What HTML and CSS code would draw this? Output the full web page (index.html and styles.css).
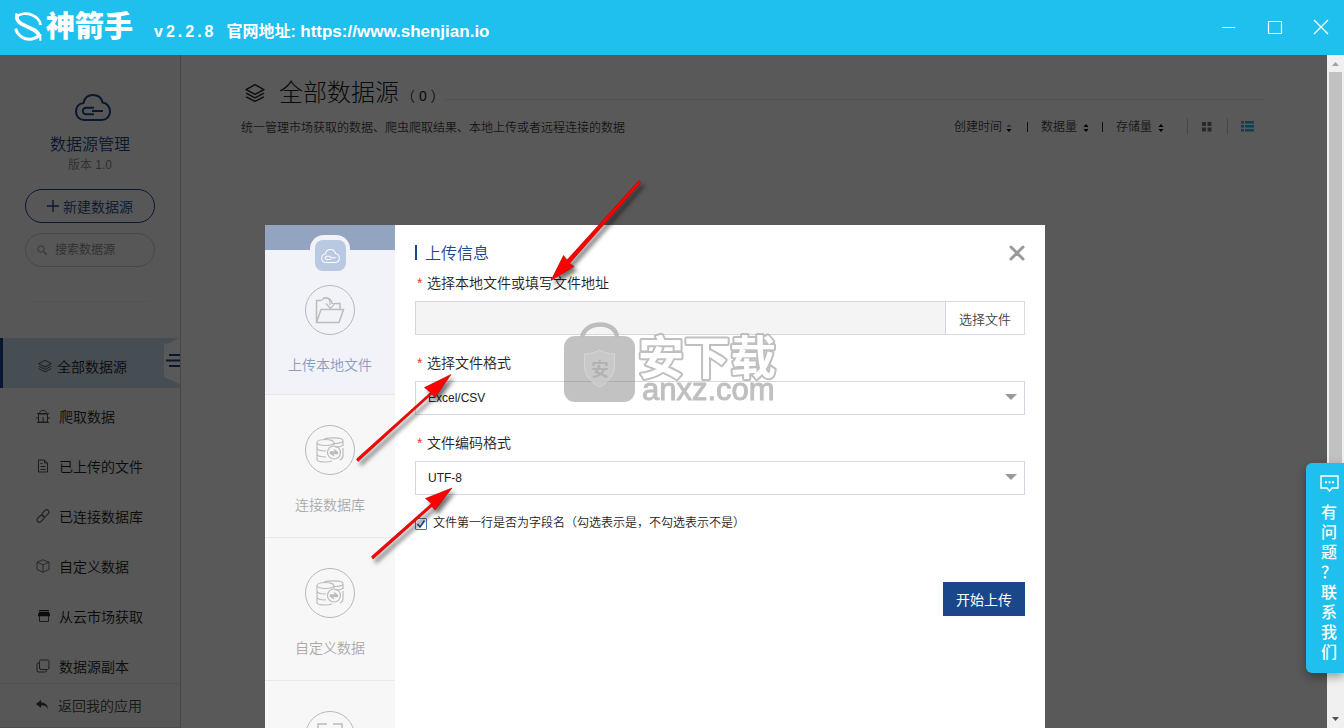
FILE: index.html
```html
<!DOCTYPE html>
<html lang="zh-CN">
<head>
<meta charset="utf-8">
<title>神箭手 - 数据源管理</title>
<link rel="stylesheet" href="styles.css">
</head>
<body>
<svg class="defs" width="0" height="0" aria-hidden="true">
  <defs>
    <symbol id="layers" viewBox="0 0 18 18"><path d="M9 1.5 17 6 9 10.2 1 6Z M1 9.2l8 4.1 8-4.1 M1 12.4l8 4.1 8-4.1" fill="none" stroke="currentColor" stroke-width="1.3" stroke-linejoin="round"/></symbol>
    <symbol id="cloud" viewBox="0 0 36 27"><path d="M9 26C4 26 1 22 1 17.500C1 13 4 9.500 8.500 9C9.500 4 13 1 18 1s8.500 3 9.500 7.500C32 9 35 13 35 17.500C35 22 32 26 27 26Z" fill="none" stroke="currentColor" stroke-width="2"/><path d="M19 13.800h-8a3.200 3.200 0 0 0 0 6.400h8M17 17h11" fill="none" stroke="currentColor" stroke-width="2"/></symbol>
    <symbol id="sort" viewBox="0 0 6 10"><path d="M.5 4 3 1 5.500 4Z"/><path d="M.5 6h5L3 9Z" fill="currentColor"/></symbol>
    <symbol id="database" viewBox="0 0 28 26"><g fill="none" stroke="currentColor" stroke-width="1.200"><path d="M1 5.500C1 3.500 5 2.500 10 2.500c4 0 8 1.200 8 3s-4 3-8.500 3S1 7.500 1 5.500v17c0 1.500 4 2.500 8 2.500 3 0 5-.3 7-1M1 11c0 2 4 3 9 3M1 17c0 2 4 3 9 3M8 2.200C10 1.200 14 .8 18 .8c5 0 9 1 9 3s-4 2.700-9 2.700M27 4v5M27 11v8c0 2-1 3-3 4M18 5.500V8M19 10c4 0 8-1 8-2.500"/><circle cx="18" cy="15.500" r="6.500"/><path d="M14 15h7l-3-2.500M22 16.500h-7l3 2.500" stroke-width="1.500"/></g></symbol>
  </defs>
</svg>

<header class="titlebar">
  <svg class="logo-mark" viewBox="0 0 84 87" width="28" height="29" aria-hidden="true"><g fill="none" stroke="#fff"><path d="M6 15C16 4 38 2 54 9c14 6 24 16 26 30" stroke-width="8"/><path d="M9 12C6 32 28 38 44 46c16 8 30 12 30 26" stroke-width="11"/><path d="M5 50c5 20 27 36 49 31 10-2 18-6 23-12" stroke-width="9"/><path d="M7 4v18M79 66v20" stroke-width="6"/></g></svg>
  <span class="logo-name">神箭手</span>
  <span class="version">v2.2.8</span>
  <span class="site">官网地址: <a href="#">https://www.shenjian.io</a></span>
  <div class="window-buttons">
    <button type="button" aria-label="最小化"><svg width="16" height="16" viewBox="0 0 16 16"><path d="M1 8.500h13" stroke="#fff"/></svg></button>
    <button type="button" aria-label="最大化"><svg width="16" height="16" viewBox="0 0 16 16"><path d="M1.500 2.500h13v12h-13Z" fill="none" stroke="#fff" stroke-width="1.200"/></svg></button>
    <button type="button" aria-label="关闭"><svg width="16" height="16" viewBox="0 0 16 16"><path d="m1 1 14 14M15 1 1 15" stroke="#fff" stroke-width="1.300"/></svg></button>
  </div>
</header>

<div class="workspace">
  <aside class="sidebar">
    <div class="brand">
      <svg class="brand-cloud" width="36" height="27"><use href="#cloud"/></svg>
      <h2>数据源管理</h2>
      <p>版本 1.0</p>
    </div>
    <button type="button" class="create"><svg width="12" height="12" viewBox="0 0 12 12"><path d="M6 0v12M0 6h12" stroke="currentColor" stroke-width="1.400"/></svg>新建数据源</button>
    <label class="search">
      <svg width="10" height="10" viewBox="0 0 10 10"><path d="m6.500 6.500 3 3" stroke="currentColor" stroke-width="1.400"/><circle cx="4" cy="4" r="3.200" fill="none" stroke="currentColor"/></svg>
      <input type="text" placeholder="搜索数据源" aria-label="搜索数据源">
    </label>
    <hr class="side-rule">
    <nav class="nav">
      <a href="#" class="active"><svg width="14" height="14"><use href="#layers"/></svg>全部数据源
        <svg class="fold" width="16" height="46" viewBox="0 0 16 46" aria-hidden="true"><path d="M0 7 16 0v46L0 39Z" fill="#fff"/><path d="M5 17h11M2 22.500h14M5 28h11" stroke="#1a468a" stroke-width="2"/></svg></a>
      <a href="#"><svg width="14" height="14" viewBox="0 0 14 14"><path d="M2.500 5h9v8h-9ZM3.500 5C3.500 0 10.500 0 10.500 5M7 8v5M0 9h2.500M11.500 9H14M1 4.500h12M1 13.500h12" fill="none" stroke="currentColor"/></svg>爬取数据</a>
      <a href="#"><svg width="14" height="14" viewBox="0 0 14 14"><path d="M2.500 1h6l3 3v9h-9ZM8.500 1v3h3M4.500 4.500h2M4.500 7.500h5M4.500 10.500h5" fill="none" stroke="currentColor"/></svg>已上传的文件</a>
      <a href="#"><svg width="14" height="14" viewBox="0 0 14 14"><g fill="none" stroke="currentColor"><rect x="5.500" y="2" width="8" height="4.500" rx="2.200" transform="rotate(-45 9.500 4.250)"/><rect x=".5" y="7.500" width="8" height="4.500" rx="2.200" transform="rotate(-45 4.500 9.750)"/></g></svg>已连接数据库</a>
      <a href="#"><svg width="14" height="14" viewBox="0 0 14 14"><path d="m7 .8 6 2.400v7.300l-6 2.700-6-2.700V3.200ZM1 3.200l6 2.700 6-2.700M7 5.900v7.300" fill="none" stroke="currentColor" stroke-width=".8"/></svg>自定义数据</a>
      <a href="#" class="market"><svg width="14" height="14" viewBox="0 0 14 14"><path d="M3 1h10v1.300H3ZM3 3h10l1.200 3v1.200H2V6Z" fill="currentColor"/><path d="M3.500 7v5.500h9V7" fill="none" stroke="currentColor" stroke-width=".8"/></svg>从云市场获取</a>
      <a href="#"><svg width="14" height="14" viewBox="0 0 14 14"><rect x="3.500" y="1" width="9.500" height="9.500" rx="1.500" fill="none" stroke="currentColor"/><path d="M3.500 4H1.800L1 5v7l1 1h7.500l1-1v-1.500" fill="none" stroke="currentColor"/></svg>数据源副本</a>
    </nav>
    <a href="#" class="back"><svg width="13" height="12" viewBox="0 0 13 12"><path d="M5 1 0 5l5 4V6.500c4 0 5.500.5 7 3.500 0-4-3-6.500-7-6.500Z" fill="currentColor"/></svg>返回我的应用</a>
  </aside>

  <main class="content">
    <div class="heading">
      <svg width="20" height="20"><use href="#layers"/></svg>
      <h1>全部数据源</h1>
      <span class="count">（ 0 ）</span>
      <span class="heading-rule"></span>
    </div>
    <div class="toolbar">
      <p>统一管理市场获取的数据、爬虫爬取结果、本地上传或者远程连接的数据</p>
      <div class="sorts">
        <button type="button" class="first">创建时间<svg width="6" height="10"><use href="#sort"/></svg></button>
        <button type="button">数据量<svg width="6" height="10"><use href="#sort"/></svg></button>
        <button type="button">存储量<svg width="6" height="10"><use href="#sort"/></svg></button>
      </div>
      <div class="views">
        <button type="button" aria-label="网格"><svg width="10" height="10" viewBox="0 0 10 10"><path d="M0 0h4v4H0ZM5.500 0h4v4h-4ZM0 5.500h4v4H0ZM5.500 5.500h4v4h-4Z" fill="#777"/></svg></button>
        <button type="button" aria-label="列表"><svg width="13" height="11" viewBox="0 0 13 11"><path d="M0 0h3v2.500H0ZM4 0h9v2.500H4ZM0 4h3v2.500H0ZM4 4h9v2.500H4ZM0 8h3v2.500H0ZM4 8h9v2.500H4Z" fill="#1fc0ee"/></svg></button>
      </div>
    </div>
  </main>

  <div class="overlay">
    <section class="modal" role="dialog" aria-label="上传信息">
      <div class="types">
        <div class="types-top"><span class="app-bump"><span class="app-icon"><svg width="19" height="14"><use href="#cloud"/></svg></span></span></div>
        <a href="#" class="type current"><span class="ring"><svg width="30" height="28" viewBox="0 0 30 28"><g fill="none" stroke="currentColor" stroke-width="1.500"><path d="M1.500 26.500V4.500h5M1.500 26.500 6 13.500h22.500l-4.500 13ZM20 7.500h5v5"/><path d="M6.500 4.500C9 1 14 1 15 6v3M11 7.500l4.500 5 4-5h-2.500C17 3 12 .5 8 2" stroke-width="1.200"/></g></svg></span>上传本地文件</a>
        <a href="#" class="type"><span class="ring"><svg width="28" height="26"><use href="#database"/></svg></span>连接数据库</a>
        <a href="#" class="type"><span class="ring"><svg width="28" height="26"><use href="#database"/></svg></span>自定义数据</a>
        <a href="#" class="type" aria-label="更多"><span class="ring"><svg width="26" height="26" viewBox="0 0 26 26"><path d="M1 8V1h9M16 1h9v7M1 18v7h9M16 25h9v-7M7 9h6" fill="none" stroke="currentColor" stroke-width="1.400"/></svg></span></a>
      </div>
      <form class="form">
        <div class="form-head">
          <h3>上传信息</h3>
          <button type="button" aria-label="关闭"><svg width="16" height="16" viewBox="0 0 16 16"><path d="m2 2 12 12M14 2 2 14" stroke="#999" stroke-width="3" stroke-linecap="round"/></svg></button>
        </div>
        <div class="field">
          <label for="path"><i>*</i>选择本地文件或填写文件地址</label>
          <div class="file"><input id="path" type="text"><button type="button">选择文件</button></div>
        </div>
        <div class="field">
          <label for="format"><i>*</i>选择文件格式</label>
          <select id="format"><option>Excel/CSV</option></select>
        </div>
        <div class="field">
          <label for="encoding"><i>*</i>文件编码格式</label>
          <select id="encoding"><option>UTF-8</option></select>
        </div>
        <label class="check"><input type="checkbox" checked>文件第一行是否为字段名（勾选表示是，不勾选表示不是）</label>
        <button type="button" class="submit">开始上传</button>
      </form>
    </section>
  </div>

  <div class="scrollbar" aria-hidden="true">
    <svg width="17" height="17" viewBox="0 0 17 17"><path d="M5 11h7L8.500 7Z" fill="#a3a3a3"/></svg>
    <span class="thumb"></span>
    <svg width="17" height="17" viewBox="0 0 17 17"><path d="M5 6h7L8.500 10Z" fill="#505050"/></svg>
  </div>
</div>

<a href="#" class="help">
  <svg width="19" height="17" viewBox="0 0 19 17"><path d="M1 1h17v12h-6l-2.500 3L7 13H1Z" fill="none" stroke="#fff" stroke-width="1.400"/><path d="M5 6.300h2v2H5ZM8.500 6.300h2v2h-2ZM12 6.300h2v2h-2Z" fill="#fff"/></svg>
  <span>有问题？联系我们</span>
</a>

<svg class="marks" width="1344" height="728" viewBox="0 0 1344 728" aria-hidden="true">
  <g opacity=".9">
    <path d="M582 338C584 320 617 320 617 338" fill="none" stroke="#b8b8b8" stroke-width="4.500"/>
    <rect x="564" y="336" width="71" height="66" rx="11" fill="#b5b5b5" fill-opacity=".9"/>
    <path d="M564 381.500h71" stroke="#a8a8a8"/>
    <path d="M599.500 350c5 3 10 4 15 4v12c0 10-8 17-15 21-7-4-15-11-15-21v-12c5 0 10-1 15-4Z" fill="#c4c4c4" stroke="#d2d2d2"/>
    <text class="mark-shield" x="591" y="376">安</text>
    <text class="mark-title" x="638" y="374">安下载</text>
    <text class="mark-domain" x="642" y="400">anxz.com</text>
  </g>
  <g class="arrows">
    <path d="m639 180.500 2 2-71.500 81 4.500 3-23 14 12.500-25 3.500 4.500Z"/>
    <path d="m356.500 459 74-66.500-6-5 26.500-13-16 23-3-3.500-74 67.500Z"/>
    <path d="m371.500 556.500 60-53-6-5L452 488l-17 22-3-3.500-59 52.500Z"/>
  </g>
</svg>
</body>
</html>
```
FILE: styles.css
```css
* { box-sizing: border-box; }

body {
  margin: 0;
  height: 100vh;
  display: flex;
  flex-direction: column;
  overflow: hidden;
  position: relative;
  font-family: "Liberation Sans", "Noto Sans CJK SC", sans-serif;
  font-size: 14px;
  font-weight: 350;
  color: #222;
}

h1, h2, h3, p { margin: 0; font-weight: 350; }
a { color: inherit; text-decoration: none; }
button, input, select { font: inherit; color: inherit; }
button { background: none; border: 0; padding: 0; }
svg { flex: none; display: block; }
.defs { position: absolute; }

/* Title bar */
.titlebar {
  flex: none;
  height: 55px;
  padding: 0 15px 0 14px;
  display: flex;
  align-items: center;
  background: #1fc0ee;
  color: #fff;
  font-size: 16px;
  font-weight: 700;
}
.logo-mark { margin-bottom: 3px; }
.logo-name { font-size: 29px; font-weight: 900; line-height: 32px; margin: 0 21px 2px 4px; }
.version { letter-spacing: 3px; margin: 8px 10px 0 0; line-height: 20px; }
.site { margin-top: 8px; line-height: 20px; }
.site a { font-size: 17px; }
.window-buttons { margin: 0 0 2px auto; display: flex; gap: 30px; }

/* Page below the title bar */
.workspace { flex: 1; min-height: 0; display: flex; position: relative; background: #fff; }

.sidebar {
  width: 181px;
  flex: none;
  display: flex;
  flex-direction: column;
  background: #f8f8f8;
  border-right: 1px solid #ccc;
}
.brand { display: flex; flex-direction: column; align-items: center; padding: 39px 0 16px; }
.brand-cloud { color: #1a468a; margin-left: 5px; }
.brand h2 { font-size: 16px; line-height: 24px; margin-top: 12px; color: #1a468a; }
.brand p { font-size: 12px; line-height: 16px; color: #888; }
.create, .search {
  margin: 0 25px;
  height: 34px;
  flex: none;
  border-radius: 17px;
  display: flex;
  align-items: center;
}
.create { justify-content: center; gap: 4px; border: 1px solid #1a468a; color: #1a468a; margin-bottom: 10px; }
.search { border: 1px solid #ccc; padding: 0 11px; gap: 8px; font-size: 12px; color: #999; }
.search input { min-width: 0; width: 100%; border: 0; background: none; outline: 0; padding: 0; }
.search input::placeholder { color: #888; opacity: 1; }
.side-rule { width: 120px; border: 0; border-top: 1px solid #eee; margin: 34px auto 36px; }
.nav { flex: 1; min-height: 0; overflow: hidden; }
.nav a {
  height: 50px;
  display: flex;
  align-items: center;
  gap: 9px;
  padding: 5px 0 0 36px;
}
.nav a > svg { color: #555; }
.nav .market > svg { color: #222; }
.nav .active {
  background: #c8dfed;
  position: relative;
  padding-left: 35px;
  border-left: 3px solid #1a468a;
  gap: 5px;
}
.fold { position: absolute; right: 0; top: 0; }
.back {
  flex: none;
  height: 45px;
  display: flex;
  align-items: center;
  gap: 9px;
  padding: 0 0 1px 36px;
  border-top: 1px solid #e8e8e8;
  border-bottom: 1px solid #ddd;
  color: #444;
}

.content { flex: 1; min-width: 0; padding: 20px 63px 0 60px; }
.heading { display: flex; align-items: center; }
.heading svg { margin: 0 14px 0 4px; }
.heading h1 { font-size: 24px; line-height: 36px; font-weight: 300; }
.count { font-size: 14px; line-height: 20px; margin: 6px 0 0 2px; }
.heading-rule { flex: 1; height: 1px; margin-top: 12px; background: #e8e8e8; }
.toolbar { display: flex; align-items: center; height: 30px; font-size: 12px; color: #444; }
.sorts { margin-left: auto; display: flex; }
.sorts button { display: flex; align-items: center; gap: 6px; padding: 1px 13px 0 14px; line-height: 12px; }
.sorts button svg { color: #000; fill: #000; margin-top: 2px; }
.sorts .first { padding: 1px 15px 0 0; gap: 4px; }
.sorts .first svg { fill: #999; }
.sorts button + button { background: linear-gradient(#333, #333) 0 2px / 1px 10px no-repeat; }
.sorts button:last-child { padding-right: 23px; }
.views { display: flex; }
.views button { height: 16px; width: 40px; padding: 1px 0 0 14px; border-left: 1px solid #ccc; display: flex; align-items: center; }
.views button:last-child { width: 37px; padding-left: 13px; }

/* Dialog */
.overlay {
  position: absolute;
  inset: 0 17px 0 0;
  padding: 170px 17px 0 0;
  overflow: hidden;
  display: flex;
  justify-content: center;
  background: rgba(0, 0, 0, .65);
}
.modal { width: 780px; flex: none; display: flex; background: #fff; min-height: 100%; align-self: flex-start; }
.types { width: 130px; flex: none; background: #f7f7f7; color: #aaa; }
.types-top { height: 60px; background: linear-gradient(#93a4c1 25px, #f1f3f9 25px); padding-top: 10px; }
.app-bump {
  width: 40px;
  height: 40px;
  margin: 0 auto;
  padding-top: 5px;
  display: flex;
  justify-content: center;
  background: #f1f3f9;
  border-radius: 14px 14px 0 0;
}
.app-icon {
  width: 31px;
  height: 31px;
  border-radius: 8px;
  background: #b9c9e1;
  color: #fff;
  display: flex;
  align-items: center;
  justify-content: center;
}
.type {
  display: flex;
  flex-direction: column;
  align-items: center;
  gap: 18px;
  padding: 30px 0 20px;
  line-height: 24px;
  border-bottom: 1px solid #e8e8e8;
}
.type.current { padding: 0 0 17px; background: #f1f3f9; color: #8a9dbd; }
.ring {
  width: 50px;
  height: 50px;
  border: 1px solid #b8b8b8;
  border-radius: 50%;
  color: #bcbcbc;
  display: flex;
  align-items: center;
  justify-content: center;
}

.form { flex: 1; padding: 18px 20px 0; display: flex; flex-direction: column; }
.form-head { display: flex; align-items: center; justify-content: space-between; height: 20px; margin-bottom: 8px; }
.form-head h3 {
  font-size: 16px;
  line-height: 20px;
  padding: 1px 0 0 10px;
  color: #1a468a;
  background: linear-gradient(#1a468a, #1a468a) 0 2px / 2px 15px no-repeat;
}
.field { margin-bottom: 16px; }
.field label { display: block; line-height: 24px; margin-bottom: 6px; padding-left: 2px; }
.field i { color: #e33; font-style: normal; display: inline-block; width: 10px; }
.file { display: flex; }
.file input { flex: 1; min-width: 0; height: 34px; border: 1px solid #d3d7e0; background: #f4f4f4; padding: 0 12px; outline: 0; }
.file button { width: 79px; height: 34px; border: 1px solid #d8dbe2; border-left: 0; font-size: 13px; color: #444; }
.field select {
  width: 100%;
  height: 34px;
  padding: 0 12px;
  appearance: none;
  border: 1px solid #d3d7e0;
  border-radius: 0;
  font-size: 12px;
  background: url("data:image/svg+xml,%3Csvg xmlns='http://www.w3.org/2000/svg' width='12' height='6'%3E%3Cpath d='M0 0h12L6 6Z' fill='%23999'/%3E%3C/svg%3E") right 7px top 12px no-repeat #fff;
}
.check { display: flex; align-items: center; gap: 6px; font-size: 12px; line-height: 24px; }
.check input {
  appearance: none;
  width: 12px;
  height: 12px;
  margin: 2px 0 0;
  border: 1px solid #4a74ac;
  border-radius: 1px;
  background: url("data:image/svg+xml,%3Csvg xmlns='http://www.w3.org/2000/svg' width='10' height='10'%3E%3Cpath d='M1.500 5 4 8 8.500 1.500' fill='none' stroke='%231a468a' stroke-width='1.500'/%3E%3C/svg%3E") center no-repeat #fff;
}
.submit { align-self: flex-end; width: 82px; height: 34px; margin-top: 47px; background: #1a468a; color: #fff; font-weight: 400; }

/* Scrollbar */
.scrollbar { width: 17px; flex: none; display: flex; flex-direction: column; background: #f0f0f0; }
.thumb { flex: 0 1 72%; margin: 0 2px; background: #c1c1c1; }
.scrollbar svg:last-child { margin-top: auto; }

/* Contact tab */
.help {
  position: absolute;
  right: 0;
  bottom: 55px;
  width: 38px;
  height: 210px;
  padding: 12px 0 0 8px;
  display: flex;
  flex-direction: column;
  align-items: center;
  gap: 11px;
  border-radius: 6px 0 0 6px;
  background: #1fc0ee;
  box-shadow: 0 4px 10px rgba(0, 0, 0, .35);
  color: #fff;
  font-size: 16px;
  font-weight: 500;
  line-height: 20px;
}
.help span { width: 16px; word-break: break-all; line-break: anywhere; }

/* Stamp and arrows drawn over the page */
.marks { position: absolute; left: 0; top: 0; pointer-events: none; }
.marks text { font-family: "Liberation Sans", "Noto Sans CJK SC", sans-serif; font-weight: 700; }
.mark-shield { font-size: 18px; fill: #aaa; }
.mark-title { font-size: 46px; fill: #fff; stroke: #b9b9b9; stroke-width: 4px; paint-order: stroke; stroke-linejoin: round; }
.marks .mark-domain { font-size: 31px; font-weight: 400; fill: #b9b9b9; stroke: #b9b9b9; }
.arrows { fill: #f00; stroke: #a00; stroke-width: .6; filter: drop-shadow(3px 4px 2px rgba(0, 0, 0, .55)); }
```
